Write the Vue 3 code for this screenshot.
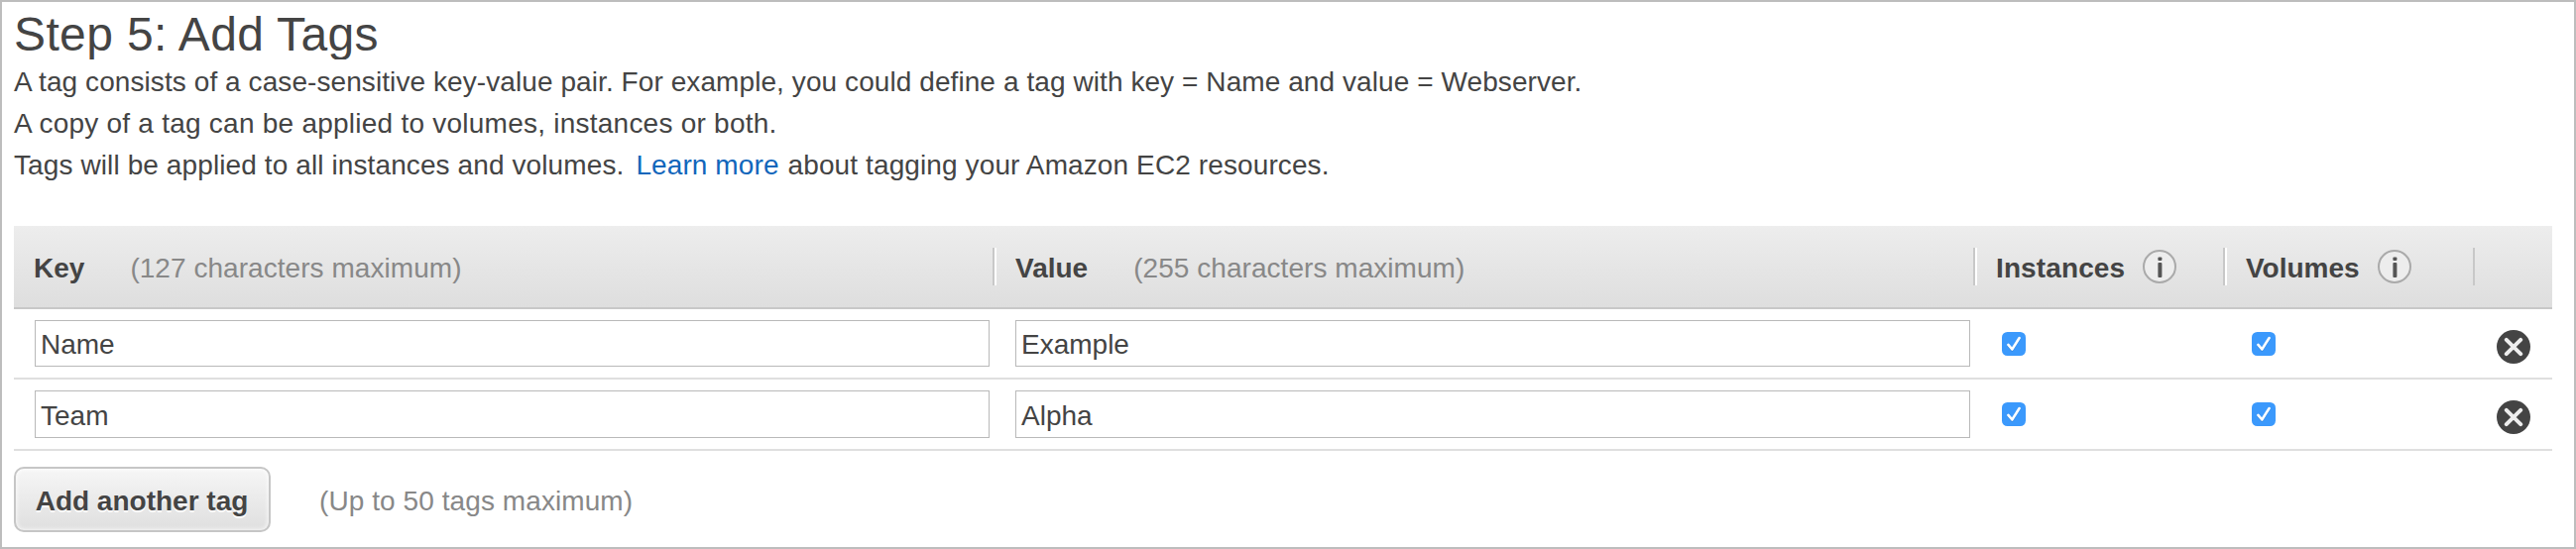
<script setup>
const rows = [
  { key: 'Name', value: 'Example' },
  { key: 'Team', value: 'Alpha' },
]
</script>

<template>
  <main class="panel">
    <h1>Step 5: Add Tags</h1>
    <div class="intro">
      <p class="l1">A tag consists of a case-sensitive key-value pair. For example, you could define a tag with key = Name and value = Webserver.</p>
      <p class="l2">A copy of a tag can be applied to volumes, instances or both.</p>
      <p><span class="l3">Tags will be applied to all instances and volumes.</span><a>Learn more</a><span class="l4">about tagging your Amazon EC2 resources.</span></p>
    </div>
    <section class="table">
      <div class="row head">
        <div class="cell sep key"><b>Key</b><span class="hint">(127 characters maximum)</span></div>
        <div class="cell sep"><b>Value</b><span class="hint">(255 characters maximum)</span></div>
        <div v-for="name in ['Instances', 'Volumes']" :key="name" class="cell sep" :class="name.toLowerCase()">
          <b>{{ name }}</b>
          <svg class="info" width="36" height="36" viewBox="0 0 36 36">
            <circle cx="18" cy="18" r="16" fill="#ededed" stroke="#aaa" stroke-width="2" />
            <rect x="16.4" y="8.4" width="4" height="3.6" rx="1" fill="#555" />
            <rect x="16.4" y="14" width="4" height="15" rx="1" fill="#555" />
          </svg>
        </div>
        <div class="cell"></div>
      </div>
      <div v-for="row in rows" :key="row.key" class="row body">
        <div class="cell"><div class="field">{{ row.key }}</div></div>
        <div class="cell"><div class="field">{{ row.value }}</div></div>
        <div v-for="n in 2" :key="n" class="cell check">
          <svg width="24" height="24" viewBox="0 0 24 24">
            <rect width="24" height="24" rx="5.5" fill="#3b99fc" />
            <path d="M6.4 13.6 L10.3 18.2 L17.6 6.6" fill="none" stroke="#2b7fd8" stroke-width="2.6" stroke-linecap="round" stroke-linejoin="round" />
            <path d="M6.4 12.9 L10.3 17.5 L17.6 6" fill="none" stroke="#fff" stroke-width="2.6" stroke-linecap="round" stroke-linejoin="round" />
          </svg>
        </div>
        <div class="cell remove">
          <svg width="36" height="36" viewBox="0 0 36 36">
            <circle cx="18" cy="18" r="17" fill="#444" />
            <path d="M10.8 10.8 L25.2 25.2 M25.2 10.8 L10.8 25.2" stroke="#eee" stroke-width="4" stroke-linecap="round" />
          </svg>
        </div>
      </div>
    </section>
    <footer>
      <button type="button">Add another tag</button>
      <span class="hint">(Up to 50 tags maximum)</span>
    </footer>
  </main>
</template>

<style>
body { margin: 0; background: #fff; }
</style>

<style scoped>
.panel {
  box-sizing: border-box;
  width: 2598px;
  height: 554px;
  border: 2px solid #bdbdbd;
  padding-left: 12px;
  padding-right: 22px;
  color: #444;
  font: 28px/42px "Liberation Sans", Arial, sans-serif;
  white-space: nowrap;
  overflow: hidden;
}
h1 { margin: 0; height: 58px; font-size: 48px; font-weight: 400; line-height: 65px; letter-spacing: .37px; overflow: hidden; }
.intro { padding-top: 2px; height: 166px; box-sizing: border-box; height: 168px; }
p { margin: 0; }
a { color: #1166bb; margin: 0 9px 0 12px; letter-spacing: .1px; }
.l1 { letter-spacing: .08px; }
.l2 { letter-spacing: .24px; }
.l3 { letter-spacing: .105px; }
.l4 { letter-spacing: .11px; }
.row { display: grid; grid-template-columns: 989px 989px 252px 252px 78px; box-sizing: border-box; }
.cell { display: flex; align-items: center; padding-left: 21px; box-sizing: border-box; }
.head { height: 84px; border-bottom: 2px solid #c8c8c8; background: linear-gradient(#ededed, #dedede); }
.head .cell { position: relative; }
.head b, .head .hint { padding-top: 4px; }
.head .hint { margin-left: 46px; }
.head .key { padding-left: 20px; }
.instances b { letter-spacing: .12px; }
.sep::after { content: ""; position: absolute; right: 0; top: 22px; width: 2px; height: 38px; background: #c8c8c8; }
.sep + .sep::before { content: ""; position: absolute; left: 0; top: 22px; width: 2px; height: 38px; background: #fff; }
.hint { color: #888; letter-spacing: .05px; }
.info { margin-left: 17px; }
.body { height: 71px; border-bottom: 2px solid #dfdfdf; }
.body + .body { height: 72px; }
.field { box-sizing: border-box; width: 963px; height: 100%; border: 1px solid #b9b9b9; padding: 3px 0 0 5px; display: flex; align-items: center; }
.body + .body .field { padding-top: 4px; }
.body .cell { padding-top: 11px; padding-bottom: 11px; }
.body .check { padding-left: 27px; align-items: flex-start; padding-top: 23px; }
.body .remove { align-items: flex-start; padding: 20px 0 0 21px; }
footer { display: flex; align-items: center; padding-top: 16px; }
button {
  box-sizing: border-box; width: 259px; height: 66px; padding: 4px 1px 0 0;
  border: 2px solid #c6c6c6; border-radius: 10px;
  background: linear-gradient(#f6f6f6, #dfdfdf);
  box-shadow: inset 0 0 4px 1px rgba(255, 255, 255, .75);
  color: #444; font: bold 28px/42px "Liberation Sans", Arial, sans-serif;
  text-shadow: 0 2px 0 #fff;
}
footer .hint { margin-left: 49px; padding-top: 4px; letter-spacing: .08px; }
</style>
